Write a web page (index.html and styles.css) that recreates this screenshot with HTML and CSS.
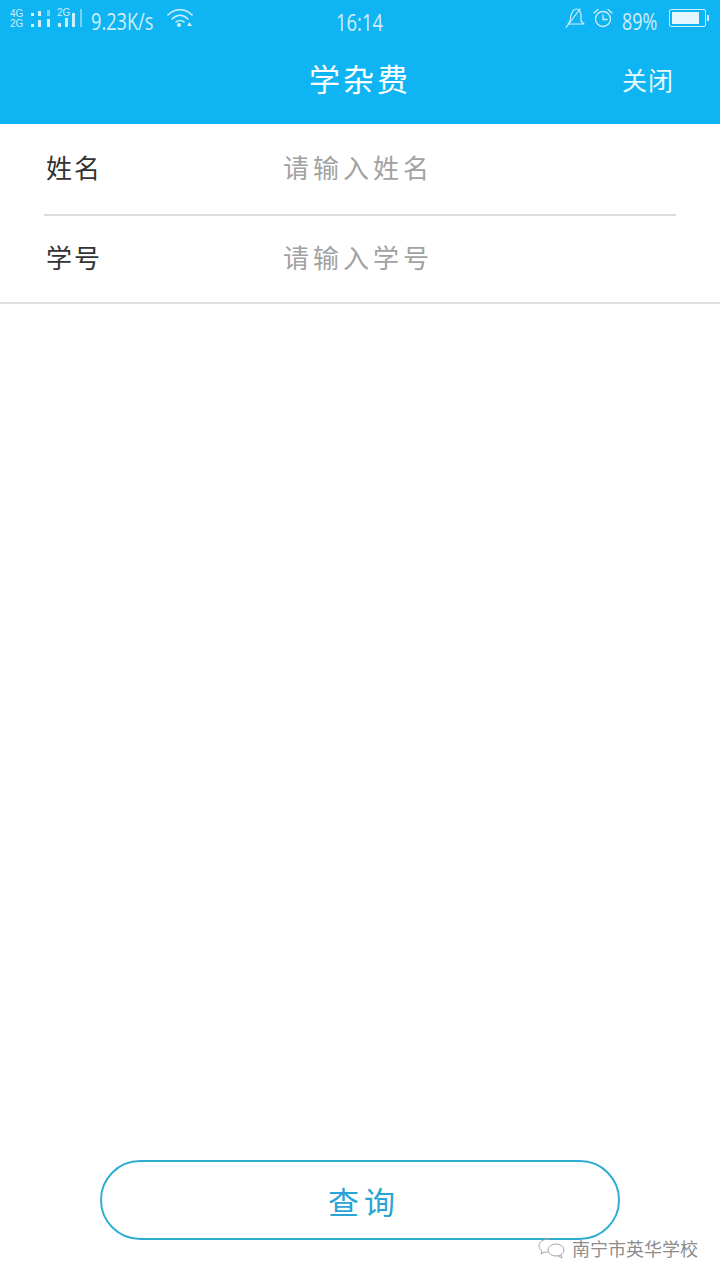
FILE: index.html
```html
<!DOCTYPE html>
<html lang="zh">
<head>
<meta charset="utf-8">
<title>学杂费</title>
<link rel="stylesheet" href="styles.css">
</head>
<body>
<div class="page">
  <header class="top">
    <div class="status">
      <div class="status-left">
        <svg class="signal" width="74" height="22" viewBox="0 7 74 22">
          <g fill="#cfeefb">
            <text x="0" y="17" class="net">4G</text>
            <text x="0" y="27" class="net">2G</text>
            <rect x="21" y="13" width="3" height="3"/>
            <rect x="28" y="11" width="3" height="5"/>
            <rect x="37" y="10" width="3" height="6" opacity=".55"/>
            <rect x="21" y="24" width="3" height="3"/>
            <rect x="28" y="20" width="3" height="7"/>
            <rect x="37" y="19" width="3" height="8"/>
            <text x="47" y="16" class="net">2G</text>
            <rect x="48" y="23" width="3" height="4"/>
            <rect x="55" y="18" width="3" height="9"/>
            <rect x="62" y="13" width="3" height="14"/>
            <rect x="70" y="9" width="2" height="18" opacity=".55"/>
          </g>
        </svg>
        <span class="speed">9.23K/s</span>
        <svg class="wifi" width="26" height="20" viewBox="0 0 26 20" fill="none" stroke="#cfeefb" stroke-width="1.6" stroke-linecap="round">
          <path d="M1 7C8 0 18 0 25 7"/>
          <path d="M5 11C10 6 16 6 21 11"/>
          <path d="M9 14C11 12 15 12 17 14"/>
          <circle cx="12" cy="17" r="1.2" fill="#cfeefb"/>
          <path d="M20 18h5l-2.500-4z" fill="#cfeefb" stroke="none"/>
        </svg>
      </div>
      <span class="clock">16:14</span>
      <div class="status-right">
        <svg width="20" height="20" viewBox="0 0 20 20" fill="none" stroke="#cfeefb" stroke-width="1.2" stroke-linecap="round" stroke-linejoin="round">
          <path d="M3 16h16l-3-3V7c0-3-2-6-4.500-6S7 4 6 7l-1 6z"/>
          <path d="M1 19.500L15 1"/>
        </svg>
        <svg class="alarm" width="20" height="20" viewBox="0 0 20 20" fill="none" stroke="#cfeefb" stroke-width="1.3" stroke-linecap="round">
          <circle cx="10" cy="11" r="7.500"/>
          <path d="M10 7v4.500h4"/>
          <path d="M1 5l4-3.500M19 5l-4-3.500"/>
        </svg>
        <span class="pct">89%</span>
        <div class="battery"><span class="level"></span></div>
        <span class="tip"></span>
      </div>
    </div>
    <div class="title-row">
      <h1 class="title">学杂费</h1>
      <span class="close">关闭</span>
    </div>
  </header>

  <section class="form">
    <div class="row row-first">
      <span class="label">姓名</span>
      <span class="hint">请输入姓名</span>
    </div>
    <div class="row">
      <span class="label">学号</span>
      <span class="hint">请输入学号</span>
    </div>
  </section>

  <main class="spacer"></main>

  <div class="action">
    <button class="query">查询</button>
  </div>

  <div class="mark">
    <svg width="30" height="22" viewBox="0 0 30 22" fill="none" stroke="#a8a8a8" stroke-width="1">
      <path d="M12 2C6 2 2 5 2 9c0 2 1 4 3 5l-1 3 4-2c1 .3 2 .4 3 .4"/>
      <ellipse cx="19" cy="13" rx="8" ry="6"/>
      <path d="M24 18l1 3-4-2"/>
    </svg>
    <span class="mark-text">南宁市英华学校</span>
  </div>
</div>
</body>
</html>
```

FILE: styles.css
```css
* { box-sizing: border-box; }
html, body { margin: 0; padding: 0; }
body {
  width: 720px;
  height: 1280px;
  background: #fff;
  font-family: "Noto Sans CJK SC", "Noto Sans", sans-serif;
  overflow: hidden;
}
.page {
  position: relative;
  width: 720px;
  height: 1280px;
  display: flex;
  flex-direction: column;
}
.top {
  height: 124px;
  background: #0fb4f2;
  display: flex;
  flex-direction: column;
  flex: none;
}
.status {
  height: 44px;
  padding: 6px 11px 0 10px;
  display: grid;
  grid-template-columns: 1fr auto 1fr;
  align-items: start;
  color: #cfeefb;
}
.status-left { display: flex; align-items: center; height: 30px; }
.signal { flex: none; margin-top: -6px; }
.net { font: 10px "Liberation Sans", sans-serif; }
.speed {
  margin-left: 7px;
  width: 70px;
  font: 23px/30px "Open Sans", sans-serif;
  transform: scaleX(.79);
  transform-origin: left center;
  white-space: nowrap;
}
.wifi { margin-top: -6px; flex: none; margin-left: 6px; }
.clock {
  width: 47px;
  font: 23px/32px "Open Sans", sans-serif;
  transform: scaleX(.8);
  transform-origin: left center;
  white-space: nowrap;
}
.status-right {
  display: flex;
  align-items: center;
  justify-content: flex-end;
  height: 30px;
  margin-top: -3px;
}
.alarm { margin-left: 8px; }
.pct {
  width: 35px;
  margin: 6px 0 0 9px;
  font: 23px/30px "Open Sans", sans-serif;
  transform: scaleX(.78);
  transform-origin: left center;
  white-space: nowrap;
}
.battery {
  margin-left: 12px;
  width: 37px;
  height: 18px;
  border: 1.500px solid #cfeefb;
  padding: 2px;
  border-radius: 2px;
}
.level { display: block; width: 88%; height: 100%; background: #e4f7fe; }
.tip { width: 2px; height: 6px; margin-left: 1px; background: #cfeefb; }
.title-row {
  position: relative;
  flex: 1;
  display: flex;
  align-items: center;
  justify-content: center;
  padding-bottom: 12px;
}
.title {
  margin: 0;
  font-size: 31px;
  font-weight: 400;
  color: #fff;
  letter-spacing: 3px;
  line-height: 44px;
}
.close {
  position: absolute;
  right: 46px;
  top: 17px;
  font-size: 25px;
  line-height: 36px;
  color: #e8f9ff;
  letter-spacing: 1px;
}
.form {
  flex: none;
  padding: 0 44px;
  border-bottom: 2px solid #dfdfdf;
}
.row {
  height: 86px;
  padding-bottom: 5px;
  display: flex;
  align-items: center;
}
.row-first {
  height: 92px;
  border-bottom: 2px solid #dcdcdc;
}
.label {
  width: 239px;
  padding-left: 2px;
  font-size: 26px;
  letter-spacing: 2px;
  color: #333;
}
.hint {
  font-size: 26px;
  letter-spacing: 4px;
  color: #a2a2a2;
}
.spacer { flex: 1; }
.action {
  flex: none;
  display: flex;
  justify-content: center;
  padding-bottom: 40px;
}
.query {
  width: 520px;
  height: 80px;
  padding: 0 0 0 8px;
  background: #fff;
  border: 2px solid #30aed2;
  border-radius: 40px;
  color: #2aa4d4;
  font: 31px/1 "Noto Sans CJK SC", sans-serif;
  letter-spacing: 5px;
}
.mark {
  position: absolute;
  left: 537px;
  top: 1236px;
  display: flex;
  align-items: center;
  gap: 5px;
}
.mark-text {
  font-size: 18px;
  line-height: 24px;
  color: #8c8c8c;
  text-shadow: 0 0 2px #fff;
  white-space: nowrap;
}
```
